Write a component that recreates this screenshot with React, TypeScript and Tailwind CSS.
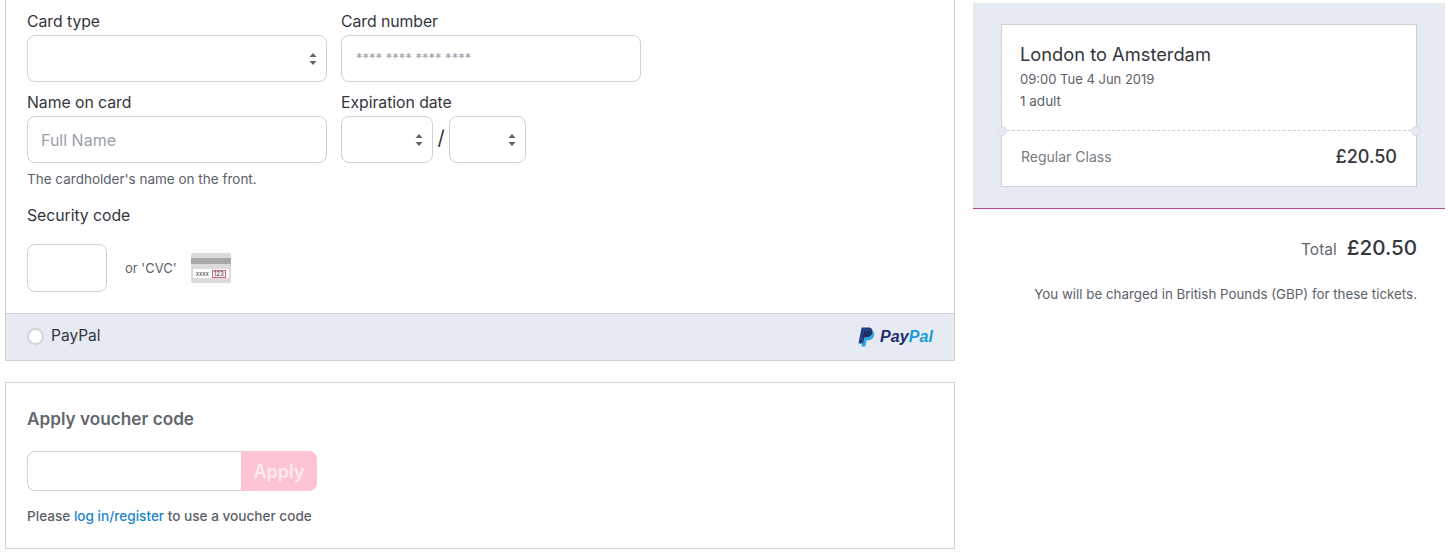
import React from 'react';

const FONT = 'font-["Inter","Noto_Sans",sans-serif]';

const Arrows: React.FC = () => (
  <svg width="8" height="14" viewBox="0 0 8 14" className="shrink-0">
    <path d="M4 1 L7.5 5 H0.5 Z" fill="#5f646c" />
    <path d="M4 13 L7.5 9 H0.5 Z" fill="#5f646c" />
  </svg>
);

const Select: React.FC<{ width: string }> = ({ width }) => (
  <div className={`${width} h-[47px] bg-white border border-[#cfd1d4] rounded-[8px] flex items-center justify-end pr-[9px]`}>
    <Arrows />
  </div>
);

const Label: React.FC<{ children: React.ReactNode }> = ({ children }) => (
  <div className="h-[21px] leading-[21px] text-[15.8px] tracking-[-0.05px] text-[#33373d]">{children}</div>
);

const PayPalLogo: React.FC = () => (
  <div className="flex items-center gap-[5px]">
    <svg width="17" height="20" viewBox="0 0 17 20">
      <path d="M3.6 0.5 H10 C13.6 0.5 15 2.4 14.4 5.2 C13.7 8.6 11.2 10.2 8 10.2 H6.2 L5 16.4 H0.5 Z" fill="#253b80" />
      <path d="M5.6 3.6 H11.6 C15.4 3.6 16.8 5.6 16.2 8.4 C15.5 11.6 13.2 13.2 10.2 13.2 H8.6 L7.4 19.5 H3.4 Z" fill="#179bd7" opacity="0.85" />
      <path d="M5.6 3.6 H12.4 C13.2 3.8 14 4.2 14.4 5.2 C13.7 8.6 11.2 10.2 8 10.2 H6.2 L5 16.4 H4.2 Z" fill="#222d65" />
    </svg>
    <span className='font-["Liberation_Sans",sans-serif] font-bold italic text-[16px] leading-none tracking-[0.1px]'>
      <span className="text-[#1f2f6b]">Pay</span>
      <span className="text-[#179bd7]">Pal</span>
    </span>
  </div>
);

const CvcCard: React.FC = () => (
  <div className="w-[40px] h-[30px] bg-[#dcdadb] rounded-[2px] pt-[5px] flex flex-col">
    <div className="h-[6px] bg-[#a9a7a8]" />
    <div className="mt-[5px] mx-[2px] h-[9px] bg-white flex items-center justify-between px-[3px] text-[6px] leading-none text-[#333]">
      <span>xxxx</span>
      <span className="border border-[#c86a8c] px-[1px] text-[6px] leading-[6px] bg-[#fdeef3]">123</span>
    </div>
  </div>
);

export default function App() {
  return (
    <div className={`${FONT} w-[1448px] h-[560px] bg-white flex items-start pl-[5px] gap-[18px] overflow-hidden`}>
      <div className="w-[950px] shrink-0 flex flex-col gap-[21px]">
        <div className="border-x border-b border-[#d0d2d5] bg-white">
          <div className="pl-[21px] pt-[11px] pb-[21px]">
            <div className="flex gap-[14px]">
              <div>
                <Label>Card type</Label>
                <div className="mt-[3px]"><Select width="w-[300px]" /></div>
              </div>
              <div>
                <Label>Card number</Label>
                <div className="mt-[3px] w-[300px] h-[47px] border border-[#cfd1d4] rounded-[8px] flex items-center pl-[14px] text-[13px] text-[#9aa0a8]">
                  **** **** **** ****
                </div>
              </div>
            </div>
            <div className="flex gap-[14px] mt-[10px]">
              <div>
                <Label>Name on card</Label>
                <div className="mt-[3px] w-[300px] h-[47px] border border-[#cfd1d4] rounded-[8px] flex items-center pl-[13px] pt-[1px] text-[16px] text-[#9aa0a8]">
                  Full Name
                </div>
              </div>
              <div>
                <Label>Expiration date</Label>
                <div className="mt-[3px] flex items-center">
                  <Select width="w-[92px]" />
                  <span className="w-[16px] text-center text-[20px] text-[#33373d] relative top-[-2px]">/</span>
                  <Select width="w-[77px]" />
                </div>
              </div>
            </div>
            <p className="mt-[7px] h-[18px] leading-[18px] text-[13.5px] text-[#5c6169]">The cardholder's name on the front.</p>
            <div className="mt-[17px]"><Label>Security code</Label></div>
            <div className="mt-[18px] flex items-center">
              <div className="w-[80px] h-[48px] border border-[#cfd1d4] rounded-[8px]" />
              <span className="ml-[18px] pt-[2px] text-[13px] text-[#5c6169]">or 'CVC'</span>
              <div className="ml-[14px]"><CvcCard /></div>
            </div>
          </div>
          <div className="h-[47px] bg-[#e6eaf3] border-t border-[#d0d2d5] flex items-center justify-between pl-[21px] pr-[21px]">
            <div className="flex items-center gap-[7px] relative top-[-1px]">
              <div className="w-[17px] h-[17px] rounded-full bg-white border-2 border-[#d3d5da]" />
              <span className="text-[15.5px] text-[#33373d]">PayPal</span>
            </div>
            <PayPalLogo />
          </div>
        </div>

        <div className="h-[167px] border border-[#d0d2d5] px-[21px] pt-[24px]">
          <h3 className="h-[24px] leading-[24px] text-[17.2px] font-semibold text-[#62676e]">Apply voucher code</h3>
          <div className="mt-[20px] flex w-[290px] h-[40px]">
            <div className="flex-1 border border-r-0 border-[#cfd1d4] rounded-l-[8px]" />
            <div className="w-[76px] bg-[#ffc4d4] rounded-r-[8px] flex items-center justify-center text-[18px] font-semibold text-white/70">
              Apply
            </div>
          </div>
          <p className="mt-[16px] h-[18px] leading-[18px] text-[13.6px] font-medium text-[#5c6169]">
            Please <span className="text-[#1c86c8]">log in/register</span> to use a voucher code
          </p>
        </div>
      </div>

      <div className="w-[472px] shrink-0 pt-[3px]">
        <div className="h-[206px] bg-[#e6eaf3] border-b border-[#b84a8a] px-[28px] pt-[21px]">
          <div className="relative h-[163px] bg-white border border-[#d0d2d5]">
            <div className="h-[106px] border-b border-dashed border-[#cfd1d4] pl-[18px] pt-[17px]">
              <div className="h-[24px] leading-[24px] text-[18.3px] text-[#33373d]">London to Amsterdam</div>
              <div className="mt-[3px] h-[20px] leading-[20px] text-[13px] text-[#5c6169]">09:00 Tue 4 Jun 2019</div>
              <div className="mt-[2px] h-[20px] leading-[20px] text-[13.5px] text-[#5c6169]">1 adult</div>
            </div>
            <div className="h-[50px] pl-[19px] pr-[19px] flex items-center justify-between">
              <span className="text-[14px] text-[#767b82]">Regular Class</span>
              <span className="text-[18px] font-medium text-[#33373d]">£20.50</span>
            </div>
            <div className="absolute left-[-5px] top-[101px] w-[10px] h-[10px] rounded-full bg-[#e6eaf3] border border-[#d8dbe2]" />
            <div className="absolute right-[-5px] top-[101px] w-[10px] h-[10px] rounded-full bg-[#e6eaf3] border border-[#d8dbe2]" />
          </div>
        </div>
        <div className="mt-[24px] pr-[28px] flex items-baseline justify-end gap-[10px]">
          <span className="text-[15.5px] text-[#62676e]">Total</span>
          <span className="text-[20.6px] font-medium text-[#33373d]">£20.50</span>
        </div>
        <p className="mt-[20px] pr-[28px] text-right text-[13.35px] leading-[20px] text-[#5c6169]">
          You will be charged in British Pounds (GBP) for these tickets.
        </p>
      </div>
    </div>
  );
}
